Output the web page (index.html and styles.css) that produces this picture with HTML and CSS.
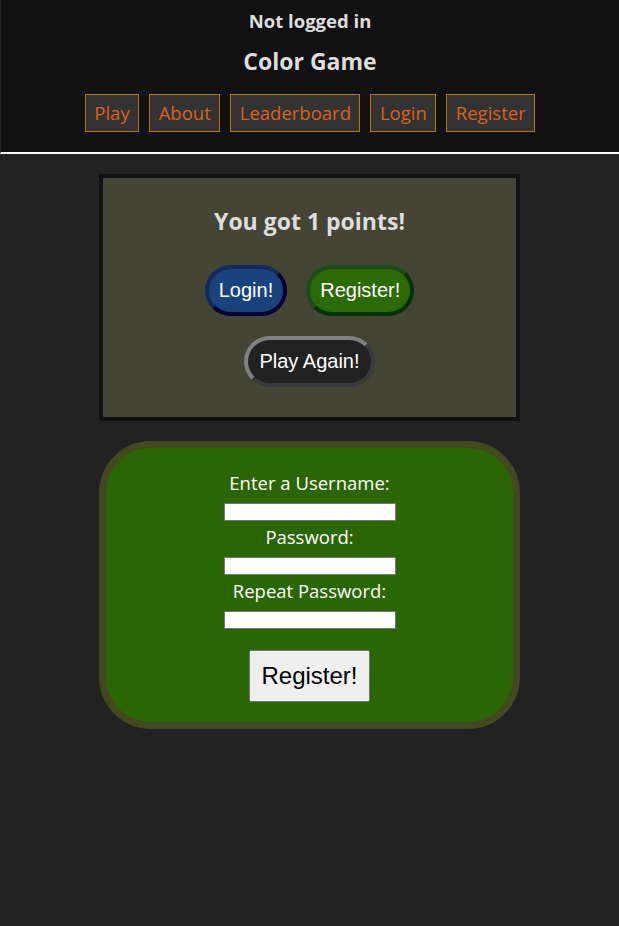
FILE: index.html
```html
<!DOCTYPE html>
<html lang="en">
<head>
<meta charset="utf-8">
<title>Color Game</title>
<link rel="stylesheet" href="styles.css">
</head>
<body>
<header class="site-header">
  <div class="status">Not logged in</div>
  <h1 class="title">Color Game</h1>
  <nav class="nav">
    <a class="nav-link" href="#">Play</a>
    <a class="nav-link" href="#">About</a>
    <a class="nav-link" href="#">Leaderboard</a>
    <a class="nav-link" href="#">Login</a>
    <a class="nav-link" href="#">Register</a>
  </nav>
</header>
<main class="main">
  <section class="result-card">
    <h2 class="result-title">You got 1 points!</h2>
    <div class="result-actions">
      <div class="btn-row">
        <button class="pill pill-login">Login!</button>
        <button class="pill pill-register">Register!</button>
      </div>
      <div class="btn-row">
        <button class="pill pill-play">Play Again!</button>
      </div>
    </div>
  </section>
  <section class="register-card">
    <form class="register-form">
      <label class="field-label" for="u">Enter a Username:</label>
      <input class="field-input" id="u" type="text">
      <label class="field-label" for="p1">Password:</label>
      <input class="field-input" id="p1" type="password">
      <label class="field-label" for="p2">Repeat Password:</label>
      <input class="field-input" id="p2" type="password">
      <button class="submit-btn" type="button">Register!</button>
    </form>
  </section>
</main>
</body>
</html>
```
FILE: styles.css
```css
* { box-sizing: border-box; }
html, body { margin: 0; padding: 0; }
body {
  background: #222222;
  font-family: "Open Sans", "Noto Sans", sans-serif;
  color: #dddddd;
  min-height: 926px;
}
.site-header {
  background: #111111;
  border-left: 1px solid #222222;
  border-bottom: 2px solid #ffffff;
  height: 154px;
  display: flex;
  flex-direction: column;
  align-items: center;
  padding-top: 9px;
}
.status {
  font-weight: 700;
  font-size: 18.5px;
  line-height: 24px;
  color: #dddddd;
}
.title {
  margin: 13px 0 0 0;
  font-weight: 700;
  font-size: 23px;
  line-height: 30px;
  color: #dddddd;
}
.nav {
  display: flex;
  gap: 10px;
  margin-top: 18px;
}
.nav-link {
  display: block;
  height: 38px;
  padding: 0 8.5px;
  background: #333333;
  border: 1px solid #b8760b;
  color: #d8621c;
  text-decoration: none;
  font-size: 18.5px;
  line-height: 36px;
}
.main {
  display: flex;
  flex-direction: column;
  align-items: center;
  padding-top: 20px;
  gap: 20px;
}
.result-card {
  width: 421px;
  height: 247px;
  background: #454535;
  border: 4px solid #111111;
  padding-top: 28px;
  display: flex;
  flex-direction: column;
  align-items: center;
}
.result-title {
  margin: 0;
  font-size: 23px;
  line-height: 30px;
  font-weight: 700;
  color: #dddddd;
}
.result-actions {
  margin-top: 29px;
  display: flex;
  flex-direction: column;
  align-items: center;
  gap: 20px;
}
.btn-row {
  display: flex;
  gap: 19px;
}
.pill {
  font-family: "Liberation Sans", Arial, sans-serif;
  font-size: 20px;
  line-height: 23px;
  color: #ffffff;
  padding: 10px 10px;
  border-width: 4px;
  border-style: solid;
  border-radius: 26px;
  height: 51px;
}
.pill-login {
  background: #18437c;
  border-color: #16295a #000033 #000033 #16295a;
}
.pill-register {
  background: #2b6a05;
  border-color: #1f4b1c #003300 #003300 #1f4b1c;
}
.pill-play {
  background: #222222;
  border-color: #808080 #3a3a3a #3a3a3a #808080;
  padding: 10px 11px;
}
.register-card {
  width: 421px;
  height: 288px;
  background: #2b6605;
  border: 7px solid #42491f;
  border-radius: 52px;
  padding-top: 23px;
}
.register-form {
  display: flex;
  flex-direction: column;
  align-items: center;
}
.field-label {
  display: block;
  font-size: 18.5px;
  line-height: 24px;
  color: #ffffff;
}
.field-input {
  width: 172px;
  height: 18px;
  margin: 8px 0 4px 0;
  border: 1px solid #767676;
  background: #ffffff;
  padding: 0 2px;
}
.submit-btn {
  margin-top: 17px;
  font-family: "Liberation Sans", Arial, sans-serif;
  font-size: 24px;
  line-height: 28px;
  color: #000000;
  background: #efefef;
  border: 1px solid #767676;
  border-radius: 2px;
  padding: 11px 11px;
  height: 52px;
}
```
